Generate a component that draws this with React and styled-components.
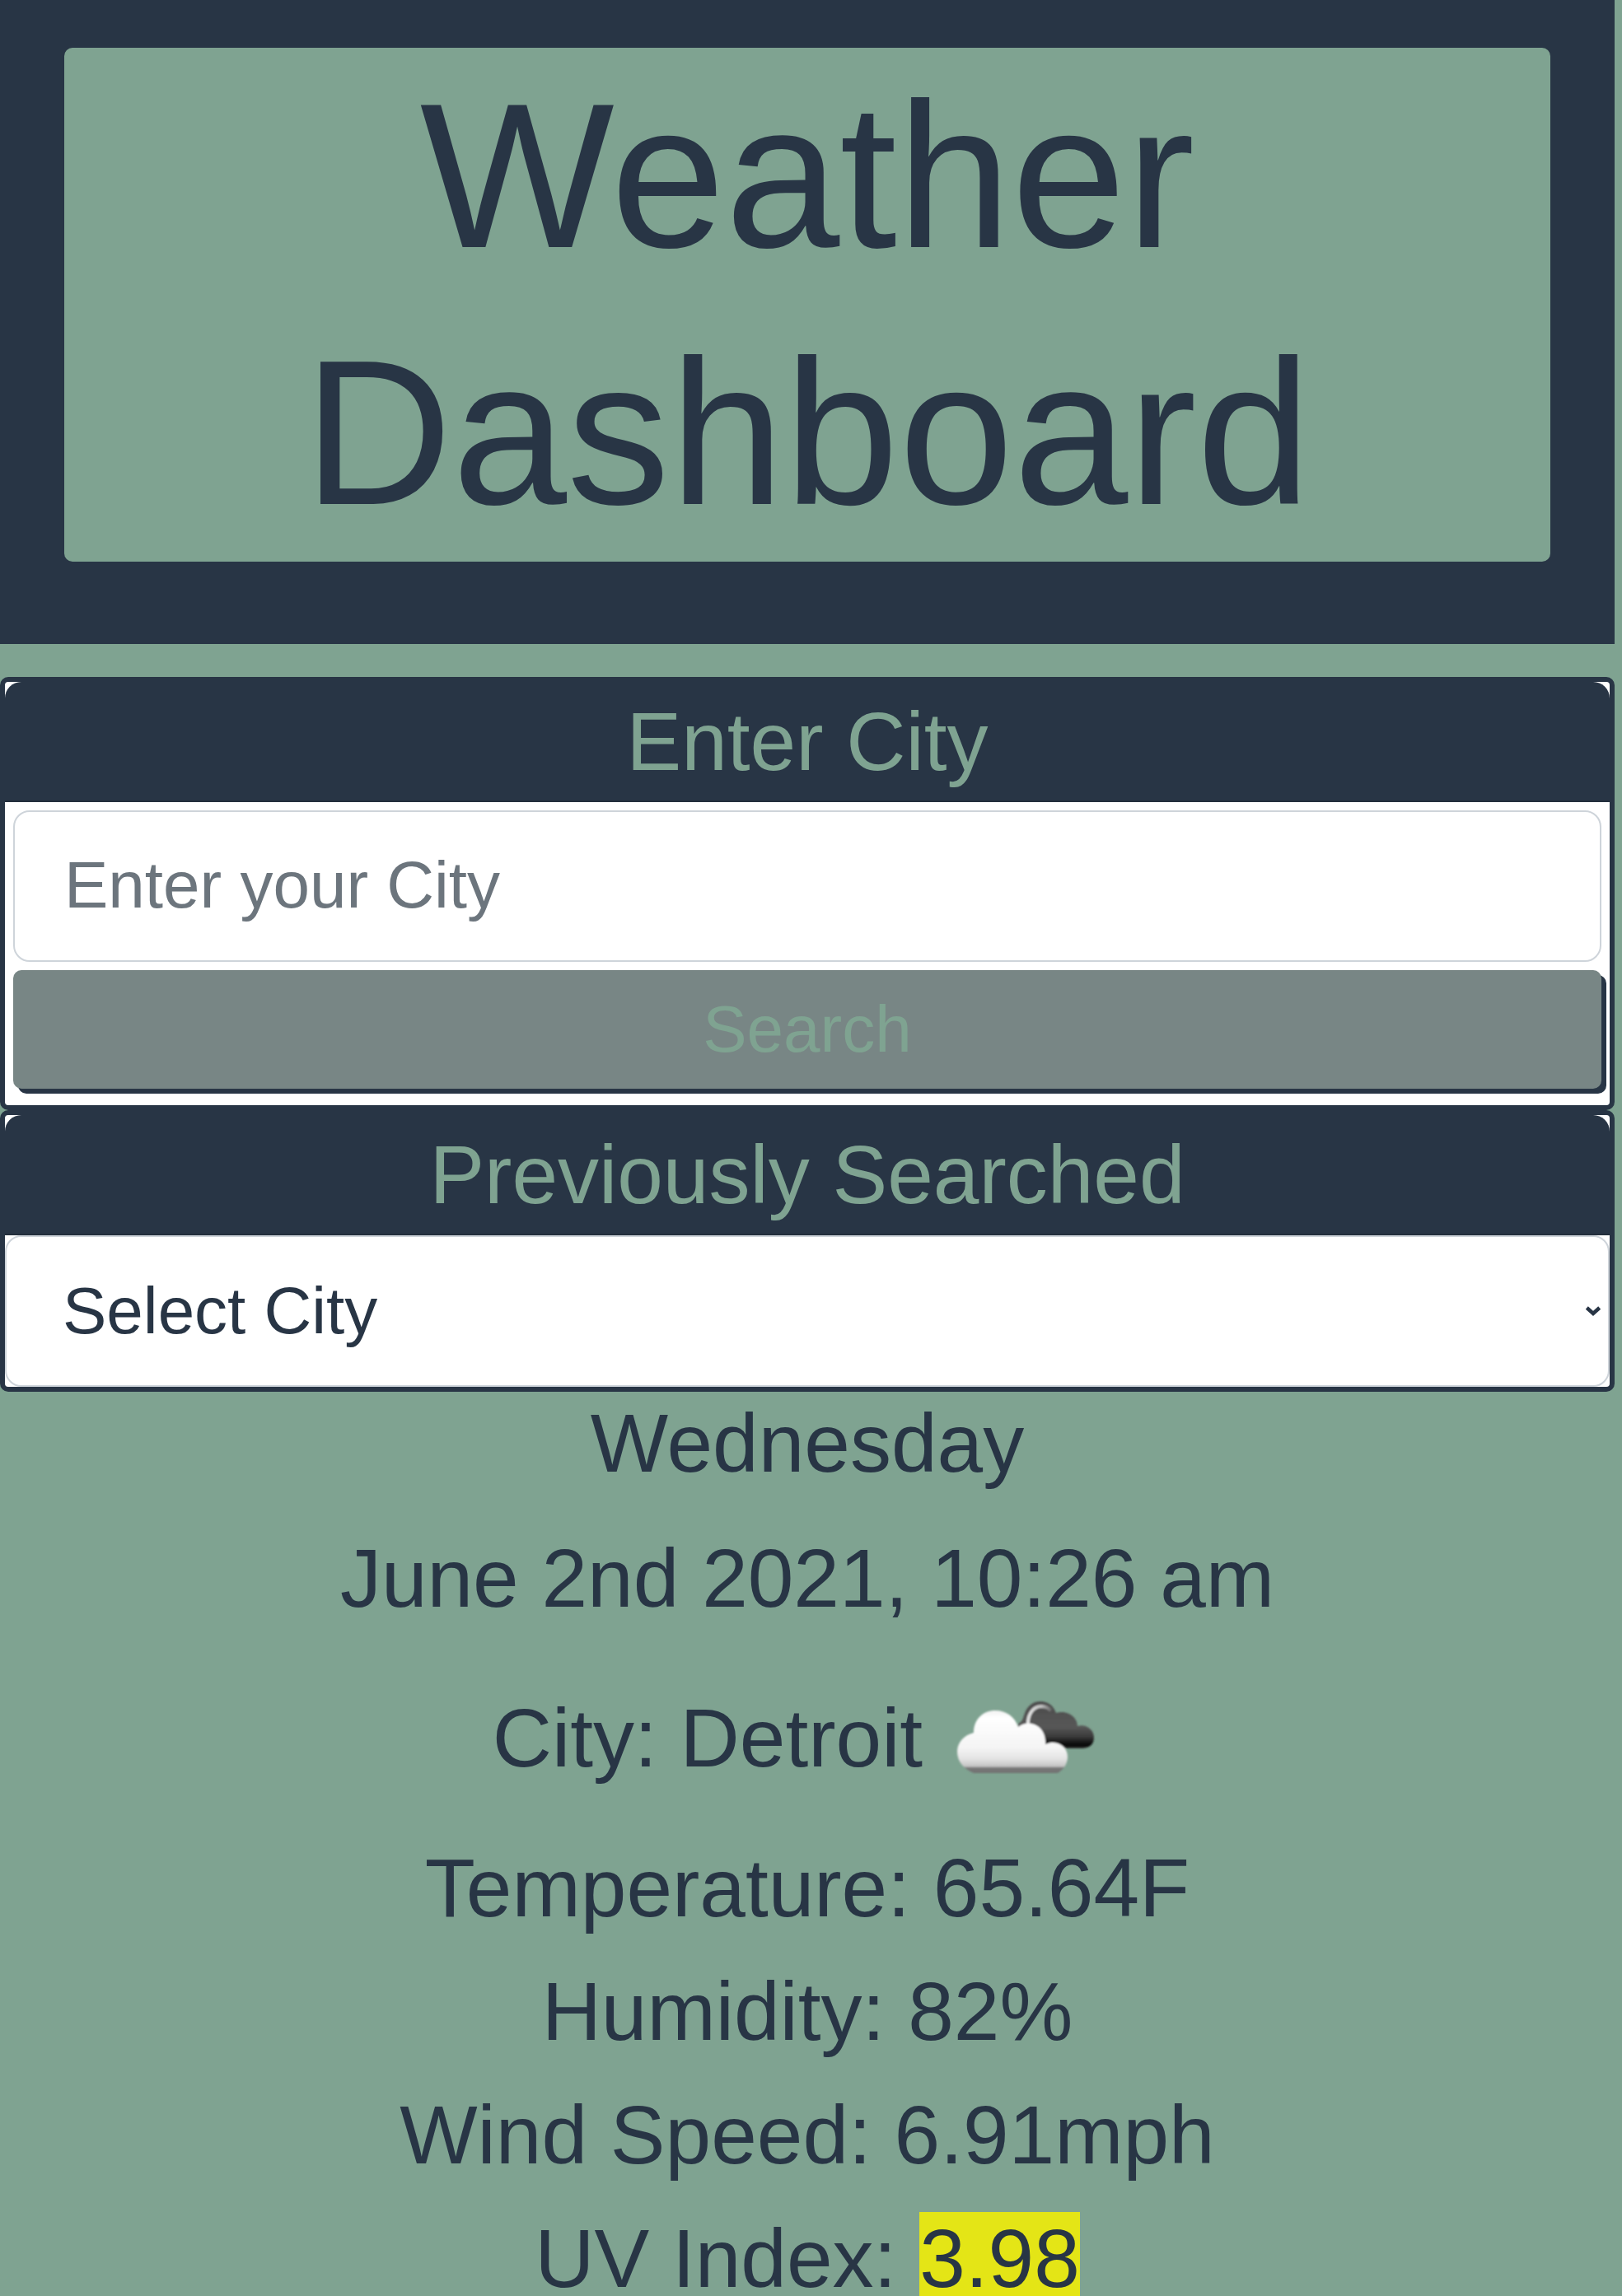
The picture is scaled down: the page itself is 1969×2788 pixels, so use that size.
import React from "react";
import styled, { createGlobalStyle } from "styled-components";

const navy = "#283545";
const sage = "#7fa391";

const Global = createGlobalStyle`
  *, *::before, *::after { box-sizing: border-box; }
  html { overflow: hidden; background: ${sage}; }
  body {
    margin: 0;
    background: ${sage};
    color: ${navy};
    font-family: Arial, "Liberation Sans", sans-serif;
  }
`;

const Page = styled.div`
  width: 1960px;
  display: flex;
  flex-direction: column;
`;

const Banner = styled.header`
  flex: none;
  height: 782px;
  padding: 58px 78px 100px;
  background: ${navy};
`;

const Title = styled.h1`
  margin: 0;
  height: 624px;
  border-radius: 10px;
  background: ${sage};
  font-size: 250px;
  font-weight: 400;
  line-height: 312px;
  text-align: center;
`;

const Card = styled.section`
  flex: none;
  margin-top: ${(p) => p.$gap || 0}px;
  border: 6px solid ${navy};
  border-radius: 10px;
  background: #fff;
`;

const CardHeader = styled.h2`
  margin: 0;
  height: 146px;
  padding: 12px 0;
  border-bottom: 2px solid #232e3c;
  border-radius: 20px 20px 0 0;
  background: ${navy};
  color: ${sage};
  font-size: 100px;
  font-weight: 400;
  line-height: 120px;
  text-align: center;
`;

const SearchForm = styled.div`
  display: flex;
  flex-direction: column;
  gap: 10px;
  padding: 10px 10px 20px;
`;

const CityInput = styled.input`
  display: block;
  width: 100%;
  height: 184px;
  padding: 29px 60px 31px;
  border: 2px solid #ced4da;
  border-radius: 20px;
  background: #fff;
  font: 400 80px/120px Arial, "Liberation Sans", sans-serif;
  &::placeholder { color: #6c757d; opacity: 1; }
`;

const SearchButton = styled.button`
  display: block;
  width: 100%;
  height: 144px;
  padding: 0;
  border: 0;
  border-radius: 10px;
  background: #788685;
  box-shadow: 6px 6px 0 ${navy};
  color: ${sage};
  font: 400 80px/120px Arial, "Liberation Sans", sans-serif;
`;

const CitySelect = styled.div`
  display: flex;
  align-items: center;
  justify-content: space-between;
  height: 184px;
  padding: 0 8px 0 68px;
  border: 2px solid #ced4da;
  border-radius: 20px;
  font-size: 80px;
  line-height: 120px;
`;

const Current = styled.main`
  display: flex;
  flex-direction: column;
  padding-top: 2px;
  text-align: center;
  font-size: 100px;
`;

const Heading = styled.div`
  height: ${(p) => p.$height}px;
  line-height: 120px;
`;

const CityRow = styled.div`
  display: flex;
  justify-content: center;
  align-items: center;
  height: 200px;
  margin-bottom: 7px;
  line-height: 120px;
`;

const CloudIcon = styled.svg`
  display: block;
  flex: none;
  width: 200px;
  height: 200px;
  margin: 0 14px 0 28px;
`;

const Reading = styled.div`
  height: 150px;
  line-height: 150px;
`;

const Uv = styled.span`
  background: #e4e516;
`;

function BrokenClouds() {
  return (
    <CloudIcon viewBox="0 0 200 200" aria-label="broken clouds">
      <defs>
        <linearGradient id="front" x1="0" y1="0" x2="0" y2="1">
          <stop offset="0" stopColor="#f2f2f2" />
          <stop offset=".12" stopColor="#fff" />
          <stop offset=".6" stopColor="#f4f4f4" />
          <stop offset=".78" stopColor="#e2e2e2" />
          <stop offset=".89" stopColor="#c4c4c4" />
          <stop offset=".92" stopColor="#767676" />
          <stop offset="1" stopColor="#727272" />
        </linearGradient>
        <linearGradient id="back" x1="0" y1="0" x2="0" y2="1">
          <stop offset="0" stopColor="#4c4c4c" />
          <stop offset=".55" stopColor="#575757" />
          <stop offset=".75" stopColor="#3a3a3a" />
          <stop offset=".93" stopColor="#080808" />
          <stop offset="1" stopColor="#303030" />
        </linearGradient>
        <linearGradient id="rim" x1="0" y1="0" x2="1" y2="0">
          <stop offset="0" stopColor="#e4e4e4" />
          <stop offset=".6" stopColor="#bdbdbd" />
          <stop offset="1" stopColor="#666" />
        </linearGradient>
        <filter id="soft"><feGaussianBlur stdDeviation="1.2" /></filter>
      </defs>
      <g filter="url(#soft)">
        <path
          fill="url(#back)"
          d="M87 92 L88 83 Q93 81 95 73 C99 60 107 56 115 56 C124 56 131 61 134 70 C146 66 160 74 160 86 C170 83 180 90 180 100 C180 108 174 113 166 113 H120 Z"
        />
        <path
          fill="none"
          stroke="url(#rim)"
          strokeWidth="4"
          d="M100 86 C99 72 106 62 116 62 C121 62 125 64 128 67"
        />
        <path
          fill="url(#front)"
          d="M34 143 C22 138 14 129 14 117 C14 106 22 97 34 94 C34 77 46 67 60 67 C74 67 84 75 88 87 C93 83 98 82 104 83 C115 85 122 95 121 108 C134 102 148 110 148 123 C148 132 143 139 136 143 Z"
        />
      </g>
    </CloudIcon>
  );
}

export default function App() {
  return (
    <>
      <Global />
      <Page>
        <Banner>
          <Title>Weather<br />Dashboard</Title>
        </Banner>
        <Card $gap={40}>
          <CardHeader>Enter City</CardHeader>
          <SearchForm>
            <CityInput placeholder="Enter your City" />
            <SearchButton>Search</SearchButton>
          </SearchForm>
        </Card>
        <Card>
          <CardHeader>Previously Searched</CardHeader>
          <CitySelect>
            <span>Select City</span>
            <svg width="22" height="14" viewBox="0 0 22 14">
              <path d="M4.3 3 L12 10 L19.7 3" fill="none" stroke={navy} strokeWidth="4.5" />
            </svg>
          </CitySelect>
        </Card>
        <Current>
          <Heading $height={164}>Wednesday</Heading>
          <Heading $height={154}>June 2nd 2021, 10:26 am</Heading>
          <CityRow>
            <span>City: Detroit</span>
            <BrokenClouds />
          </CityRow>
          <Reading>Temperature: 65.64F</Reading>
          <Reading>Humidity: 82%</Reading>
          <Reading>Wind Speed: 6.91mph</Reading>
          <Reading>UV Index: <Uv>3.98</Uv></Reading>
        </Current>
      </Page>
    </>
  );
}
